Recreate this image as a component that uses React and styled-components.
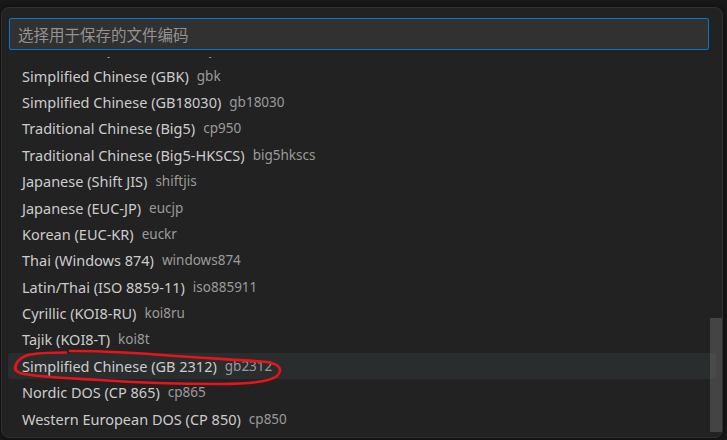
import React from 'react';
import styled, { createGlobalStyle } from 'styled-components';

const GlobalStyle = createGlobalStyle`
  html, body {
    margin: 0;
    padding: 0;
    background: #191919;
  }
  body {
    font-family: "Noto Sans", "Noto Sans CJK SC", sans-serif;
  }
`;

const ROW_HEIGHT = 26.4;
const SCROLL_OFFSET = 21;

const encodings = [
  ['Vietnamese (Windows 1258)', 'windows1258'],
  ['Simplified Chinese (GBK)', 'gbk'],
  ['Simplified Chinese (GB18030)', 'gb18030'],
  ['Traditional Chinese (Big5)', 'cp950'],
  ['Traditional Chinese (Big5-HKSCS)', 'big5hkscs'],
  ['Japanese (Shift JIS)', 'shiftjis'],
  ['Japanese (EUC-JP)', 'eucjp'],
  ['Korean (EUC-KR)', 'euckr'],
  ['Thai (Windows 874)', 'windows874'],
  ['Latin/Thai (ISO 8859-11)', 'iso885911'],
  ['Cyrillic (KOI8-RU)', 'koi8ru'],
  ['Tajik (KOI8-T)', 'koi8t'],
  ['Simplified Chinese (GB 2312)', 'gb2312'],
  ['Nordic DOS (CP 865)', 'cp865'],
  ['Western European DOS (CP 850)', 'cp850'],
];

const Page = styled.div`
  position: relative;
  width: 727px;
  height: 440px;
  box-sizing: border-box;
  padding: 7px 4px 2px 1px;
  overflow: hidden;
`;

const Widget = styled.div`
  width: 722px;
  height: 431px;
  box-sizing: border-box;
  background: #222222;
  border: 1px solid #303030;
  border-radius: 8px;
  box-shadow: 0 0 8px rgba(0, 0, 0, 0.6);
  display: flex;
  flex-direction: column;
  overflow: hidden;
`;

const Header = styled.div`
  padding: 10px 13px 7px 7px;
  flex: none;
`;

const Input = styled.div`
  height: 32px;
  box-sizing: border-box;
  border: 1px solid #0078d4;
  border-radius: 2px;
  background: #313131;
  display: flex;
  align-items: center;
  padding-left: 8px;
  color: #939393;
  font-family: "Noto Sans CJK SC", "Noto Sans", sans-serif;
  font-size: 15.5px;
`;

const List = styled.div`
  position: relative;
  flex: 1;
  overflow: hidden;
`;

const Rows = styled.div`
  display: flex;
  flex-direction: column;
`;

const Row = styled.div`
  height: ${ROW_HEIGHT}px;
  margin: 0 6px;
  padding-left: 14px;
  border-radius: 3px;
  display: flex;
  align-items: center;
  gap: 8px;
  white-space: nowrap;
  background: ${props => (props.$focused ? '#2a2d2e' : 'transparent')};
`;

const Label = styled.span`
  color: #cccccc;
  font-size: 14.5px;
`;

const Description = styled.span`
  color: #9b9b9b;
  font-size: 13.5px;
`;

const Scrollbar = styled.div`
  position: absolute;
  right: 0;
  width: 12px;
  background: rgba(121, 121, 121, 0.4);
`;

const Annotation = styled.svg`
  position: absolute;
  inset: 0;
  pointer-events: none;
`;

function App() {
  return (
    <>
      <GlobalStyle />
      <Page>
        <Widget>
          <Header>
            <Input>选择用于保存的文件编码</Input>
          </Header>
          <List>
            <Rows style={{ marginTop: -SCROLL_OFFSET }}>
              {encodings.map(([label, id]) => (
                <Row key={id} $focused={id === 'gb2312'}>
                  <Label>{label}</Label>
                  <Description>{id}</Description>
                </Row>
              ))}
            </Rows>
            <Scrollbar style={{ top: 261, height: 114 }} />
          </List>
        </Widget>
        <Annotation width="727" height="440" viewBox="0 0 727 440">
          <path
            d="M16 370 C 14 364, 19 358, 28 355 C 38 352.5, 52 352.5, 66 352.5"
            fill="none"
            stroke="#e8141c"
            strokeWidth="2.6"
            strokeLinecap="round"
          />
          <path
            d="M70 351 C 100 351, 140 353, 175 356 C 210 358.5, 245 360, 267 362 C 280 364, 283 370, 277 376 C 270 382, 250 384, 220 384 C 180 384, 140 383, 100 380 C 60 378, 30 376, 20 373 C 15 371, 14 368, 16 365"
            fill="none"
            stroke="#e8141c"
            strokeWidth="2.6"
            strokeLinecap="round"
          />
        </Annotation>
      </Page>
    </>
  );
}

export default App;
